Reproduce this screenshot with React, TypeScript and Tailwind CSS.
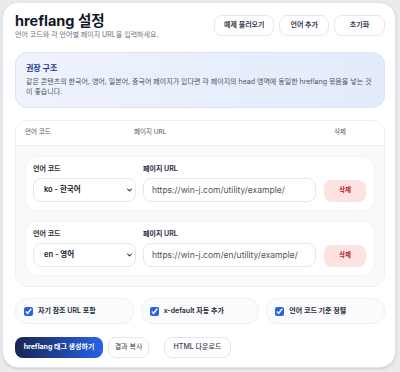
import React, { useState } from 'react';

type Row = { code: string; url: string };

const langOptions = [
  { value: 'ko', label: 'ko - 한국어' },
  { value: 'en', label: 'en - 영어' },
  { value: 'ja', label: 'ja - 일본어' },
  { value: 'zh', label: 'zh - 중국어' },
];

function App() {
  const [rows, setRows] = useState<Row[]>([
    { code: 'ko', url: 'https://win-j.com/utility/example/' },
    { code: 'en', url: 'https://win-j.com/en/utility/example/' },
  ]);
  const [opts, setOpts] = useState({ self: true, xdefault: true, sort: true });

  const font = { fontFamily: 'Inter, "Noto Sans CJK KR", sans-serif' };

  return (
    <div className="min-h-screen bg-[#eaebed] p-[2px]" style={font}>
      <div className="bg-white rounded-2xl border border-[#e1e4e8] shadow-sm pl-[12px] pr-[10px] pt-[9px] h-[366px] w-[394px]">
        {/* Header */}
        <div className="flex items-start justify-between">
          <div>
            <h1 className="text-[14.5px] font-bold text-[#111827] leading-[18px]">hreflang 설정</h1>
            <p className="text-[7px] leading-[10px] text-[#6b7280]">언어 코드와 각 언어별 페이지 URL을 입력하세요.</p>
          </div>
          <div className="flex gap-[5px] mt-[3px]">
            <button className="h-[21px] px-[9px] rounded-lg border border-[#e5e7eb] bg-white text-[7px] font-semibold text-[#374151]">예제 불러오기</button>
            <button className="h-[21px] px-[10px] rounded-lg border border-[#e5e7eb] bg-white text-[7px] font-semibold text-[#374151]">언어 추가</button>
            <button className="h-[21px] w-[51px] rounded-lg border border-[#e5e7eb] bg-white text-[7px] font-semibold text-[#374151]">초기화</button>
          </div>
        </div>

        {/* Info */}
        <div className="mt-[12px] rounded-xl border border-[#dbe5f7] bg-gradient-to-r from-[#eef3fc] to-[#e3ebfb] px-[10px] pt-[9px] pb-[10px]">
          <div className="text-[8px] leading-[12px] font-bold text-[#1e3a8a]">권장 구조</div>
          <p className="text-[7px] leading-[10px] text-[#4b5563] mt-[3px]">
            같은 콘텐츠의 한국어, 영어, 일본어, 중국어 페이지가 있다면 각 페이지의 head 영역에 동일한 hreflang 묶음을 넣는 것이 좋습니다.
          </p>
        </div>

        {/* Table */}
        <div className="mt-[12px] rounded-xl border border-[#eceef1] overflow-hidden">
          <div className="grid grid-cols-[109px_1fr_70px] items-center h-[25px] px-[9px] text-[6.5px] text-[#4b5563] bg-white border-b border-[#eef0f3]">
            <span>언어 코드</span>
            <span>페이지 URL</span>
            <span className="text-center">삭제</span>
          </div>
          <div className="bg-[#f8f9fb] px-[9px] pt-[10px] pb-[10px] flex flex-col gap-[10px]">
            {rows.map((row, i) => (
              <div key={i} className="bg-white rounded-xl border border-[#f0f2f5] px-[7px] pt-[7px] pb-[8px] flex items-end gap-[7px]">
                <div className="w-[103px]">
                  <label className="block text-[7px] leading-[10px] font-semibold text-[#1f2937] mb-[4px]">언어 코드</label>
                  <div className="relative">
                    <select
                      value={row.code}
                      onChange={e => setRows(rows.map((r, j) => (j === i ? { ...r, code: e.target.value } : r)))}
                      className="block appearance-none w-full h-[24px] rounded-lg border border-[#e5e7eb] bg-white pl-[10px] text-[7.5px] font-semibold text-[#111827]"
                    >
                      {langOptions.map(o => (
                        <option key={o.value} value={o.value}>{o.label}</option>
                      ))}
                    </select>
                    <svg className="absolute right-[4px] top-[10px] w-[5px] h-[4px]" viewBox="0 0 8 6" fill="none">
                      <path d="M1 1.5l3 3 3-3" stroke="#374151" strokeWidth="1.8" strokeLinecap="round" strokeLinejoin="round" />
                    </svg>
                  </div>
                </div>
                <div className="flex-1">
                  <label className="block text-[7px] leading-[10px] font-semibold text-[#1f2937] mb-[4px]">페이지 URL</label>
                  <input
                    value={row.url}
                    onChange={e => setRows(rows.map((r, j) => (j === i ? { ...r, url: e.target.value } : r)))}
                    className="block w-full h-[24px] rounded-lg border border-[#e5e7eb] bg-white px-[8px] text-[8.5px] text-[#4b5563] outline-none"
                  />
                </div>
                <button className="w-[42px] h-[22px] ml-[1px] mr-[1px] rounded-lg bg-[#fde2e2] text-[6.5px] font-semibold text-[#b91c1c]">삭제</button>
              </div>
            ))}
          </div>
        </div>

        {/* Options */}
        <div className="mt-[11px] grid grid-cols-3 gap-[7px]">
          {[
            { key: 'self', label: '자기 참조 URL 포함' },
            { key: 'xdefault', label: 'x-default 자동 추가' },
            { key: 'sort', label: '언어 코드 기준 정렬' },
          ].map(o => (
            <label key={o.key} className="flex items-center gap-[5px] h-[26px] px-[8px] rounded-xl border border-[#eef0f3] bg-[#fafbfc] text-[7px] font-semibold text-[#1f2937]">
              <input
                type="checkbox"
                checked={opts[o.key as keyof typeof opts]}
                onChange={e => setOpts({ ...opts, [o.key]: e.target.checked })}
                className="w-[9px] h-[9px] accent-[#2563eb]"
              />
              {o.label}
            </label>
          ))}
        </div>

        {/* Actions */}
        <div className="mt-[13px] flex">
          <button className="h-[21px] w-[88px] rounded-lg bg-gradient-to-r from-[#172554] to-[#2563eb] text-white text-[7px] font-bold">hreflang 태그 생성하기</button>
          <button className="h-[21px] w-[41px] ml-[5px] rounded-lg border border-[#e5e7eb] bg-white text-[7px] text-[#374151]">결과 복사</button>
          <button className="h-[21px] w-[67px] ml-[15px] rounded-lg border border-[#e5e7eb] bg-white text-[7px] font-medium text-[#374151]">HTML 다운로드</button>
        </div>
      </div>
    </div>
  );
}

export default App;
